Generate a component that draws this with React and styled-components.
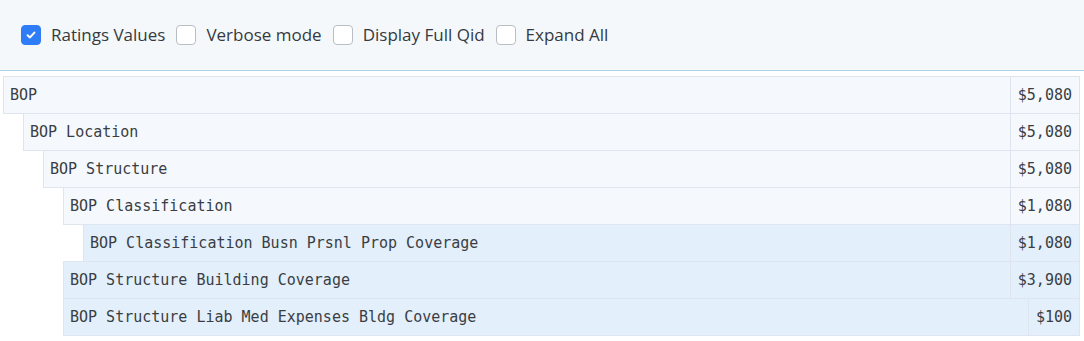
import styled, { createGlobalStyle } from 'styled-components'
import { useState } from 'react'

const GlobalStyle = createGlobalStyle`
  body {
    margin: 0;
    background: #ffffff;
    font-family: 'Open Sans', 'Noto Sans', sans-serif;
  }
`

const options = [
  { id: 'ratings', label: 'Ratings Values', checked: true },
  { id: 'verbose', label: 'Verbose mode', checked: false },
  { id: 'qid', label: 'Display Full Qid', checked: false },
  { id: 'expand', label: 'Expand All', checked: false },
]

const rows = [
  { name: 'BOP', level: 0, value: '$5,080' },
  { name: 'BOP Location', level: 1, value: '$5,080' },
  { name: 'BOP Structure', level: 2, value: '$5,080' },
  { name: 'BOP Classification', level: 3, value: '$1,080' },
  { name: 'BOP Classification Busn Prsnl Prop Coverage', level: 4, value: '$1,080', leaf: true },
  { name: 'BOP Structure Building Coverage', level: 3, value: '$3,900', leaf: true },
  { name: 'BOP Structure Liab Med Expenses Bldg Coverage', level: 3, value: '$100', leaf: true },
]

function App() {
  const [flags, setFlags] = useState(
    Object.fromEntries(options.map(o => [o.id, o.checked]))
  )

  const toggle = (id) => {
    setFlags({ ...flags, [id]: !flags[id] })
  }

  return (
    <Wrapper>
      <GlobalStyle />
      <Toolbar>
        {options.map(o => (
          <Option key={o.id} onClick={() => toggle(o.id)}>
            <Box on={flags[o.id]}>
              {flags[o.id] && (
                <svg width="12" height="12" viewBox="0 0 12 12">
                  <path d="M2.6 6.2 L5 8.4 L9.4 3.6" fill="none" stroke="#fff" strokeWidth="2" strokeLinecap="round" strokeLinejoin="round" />
                </svg>
              )}
            </Box>
            <Label>{o.label}</Label>
          </Option>
        ))}
      </Toolbar>
      <Tree>
        {rows.map(r => (
          <Row key={r.name} level={r.level} leaf={r.leaf}>
            <Name>{r.name}</Name>
            <Amount>{r.value}</Amount>
          </Row>
        ))}
      </Tree>
    </Wrapper>
  )
}

const Wrapper = styled.div`
  width: 100%;
  display: flex;
  flex-direction: column;
`

const Toolbar = styled.div`
  height: 69px;
  display: flex;
  align-items: center;
  gap: 11px;
  padding: 0 0 1px 21px;
  background-color: #f4f8fb;
  border-bottom: 1px solid #acd3e8;
`

const Option = styled.label`
  display: flex;
  align-items: center;
  gap: 10px;
  cursor: pointer;
`

const Box = styled.span`
  width: 18px;
  height: 18px;
  border-radius: 4px;
  display: flex;
  align-items: center;
  justify-content: center;
  background-color: ${props => props.on ? '#2f7df6' : '#ffffff'};
  border: 1px solid ${props => props.on ? '#2f7df6' : '#b9bec5'};
`

const Label = styled.span`
  font-size: 17px;
  color: #343a40;
  line-height: 20px;
`

const Tree = styled.div`
  display: flex;
  flex-direction: column;
  padding: 5px 4px 0 3px;
`

const Row = styled.div`
  display: flex;
  align-items: stretch;
  height: 36px;
  margin-left: ${props => props.level * 20}px;
  margin-top: -1px;
  background-color: ${props => props.leaf ? '#e3effb' : '#f5f8fc'};
  border: 1px solid #dfe5ee;
  font-family: 'DejaVu Sans Mono', monospace;
  font-size: 15px;
  color: #3a3e43;
  &:first-child {
    margin-top: 0;
  }
`

const Name = styled.div`
  flex: 1;
  display: flex;
  align-items: center;
  padding-left: 6px;
`

const Amount = styled.div`
  display: flex;
  align-items: center;
  padding: 0 7px 0 7px;
  border-left: 1px solid #dfe5ee;
`

export default App
